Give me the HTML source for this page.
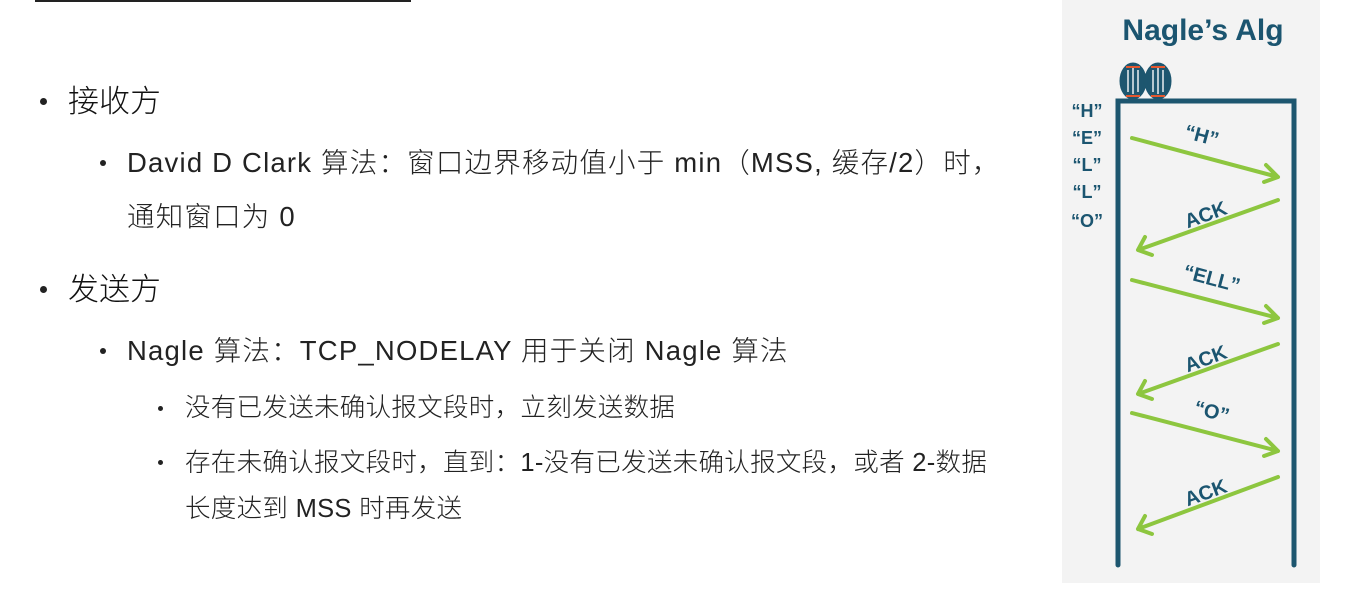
<!DOCTYPE html>
<html><head><meta charset="utf-8"><style>
body{margin:0;width:1359px;height:591px;background:#fff;position:relative;overflow:hidden;font-family:"Liberation Sans","Noto Sans CJK SC",sans-serif;color:#222}
.t{position:absolute;white-space:nowrap;font-weight:300;line-height:1}
.l1{font-size:31px;color:#111}
.l2{font-size:27.5px;letter-spacing:1.2px}
.l3{font-size:25.5px;letter-spacing:0.3px}
.b{position:absolute;border-radius:50%;background:#222}
</style></head><body>
<div style="position:absolute;left:35px;top:0;width:376px;height:2px;background:#222"></div>

<div class="b" style="left:40px;top:98px;width:7px;height:7px"></div>
<div class="t l1" style="left:68px;top:86px">接收方</div>
<div class="b" style="left:100px;top:160px;width:6px;height:6px"></div>
<div class="t l2" style="left:127px;top:149px">David D Clark 算法：窗口边界移动值小于 min（MSS, 缓存/2）时，</div>
<div class="t l2" style="left:127px;top:203px">通知窗口为 0</div>

<div class="b" style="left:40px;top:286px;width:7px;height:7px"></div>
<div class="t l1" style="left:68px;top:274px">发送方</div>
<div class="b" style="left:100px;top:348px;width:6px;height:6px"></div>
<div class="t l2" style="left:127px;top:337px">Nagle 算法：TCP_NODELAY 用于关闭 Nagle 算法</div>
<div class="b" style="left:158px;top:406px;width:5px;height:5px"></div>
<div class="t l3" style="left:185px;top:396px">没有已发送未确认报文段时，立刻发送数据</div>
<div class="b" style="left:158px;top:460px;width:5px;height:5px"></div>
<div class="t l3" style="left:185px;top:451px">存在未确认报文段时，直到：1-没有已发送未确认报文段，或者 2-数据</div>
<div class="t l3" style="left:185px;top:497px">长度达到 MSS 时再发送</div>

<svg style="position:absolute;left:0;top:0" width="1359" height="591">
<rect x="1062" y="0" width="258" height="583" fill="#f3f3f3"/>
<text x="1203" y="40" text-anchor="middle" font-family="Liberation Sans,sans-serif" font-weight="bold" font-size="30" fill="#1b5570">Nagle’s Alg</text>
<g stroke="#1d566f" stroke-width="3" fill="#1d566f">
<ellipse cx="1133" cy="81" rx="12" ry="17"/><ellipse cx="1158" cy="81" rx="12" ry="17"/>
</g>
<g stroke="#e9eef0" stroke-width="1.5"><line x1="1128" y1="70" x2="1128" y2="92"/><line x1="1133" y1="68" x2="1133" y2="94"/><line x1="1138" y1="70" x2="1138" y2="92"/><line x1="1153" y1="70" x2="1153" y2="92"/><line x1="1158" y1="68" x2="1158" y2="94"/><line x1="1163" y1="70" x2="1163" y2="92"/></g>
<g stroke="#e4572e" stroke-width="2"><line x1="1126" y1="67" x2="1140" y2="67"/><line x1="1126" y1="96" x2="1140" y2="96"/><line x1="1151" y1="67" x2="1165" y2="67"/><line x1="1151" y1="96" x2="1165" y2="96"/></g>
<path d="M1118 565 V101 H1294 V565" fill="none" stroke="#1d566f" stroke-width="5" stroke-linecap="round"/>
<g font-family="Liberation Sans,sans-serif" font-weight="bold" font-size="18" fill="#1b5570" text-anchor="middle">
<text x="1087" y="117">“H”</text><text x="1087" y="144">“E”</text><text x="1087" y="171">“L”</text><text x="1087" y="198">“L”</text><text x="1087" y="227">“O”</text>
</g>
<g stroke="#8dc63f" stroke-width="4" fill="none" stroke-linecap="round" stroke-linejoin="round">
<path d="M1132 138 L1278 177 M1266 165 L1278 177 L1264 182"/>
<path d="M1278 200 L1138 250 M1145 237 L1138 250 L1152 255"/>
<path d="M1132 280 L1278 318 M1266 306 L1278 318 L1264 323"/>
<path d="M1278 344 L1138 394 M1145 381 L1138 394 L1152 399"/>
<path d="M1132 413 L1278 451 M1266 439 L1278 451 L1264 456"/>
<path d="M1278 477 L1138 529 M1145 516 L1138 529 L1152 534"/>
</g>
<g font-family="Liberation Sans,sans-serif" font-weight="bold" font-size="20" fill="#1b5570" text-anchor="middle">
<text transform="translate(1200,142) rotate(15)">“H”</text>
<text transform="translate(1208,221) rotate(-20)">ACK</text>
<text transform="translate(1210,285) rotate(15)">“ELL”</text>
<text transform="translate(1208,365) rotate(-20)">ACK</text>
<text transform="translate(1210,418) rotate(15)">“O”</text>
<text transform="translate(1208,499) rotate(-20)">ACK</text>
</g>
</svg>
</body></html>
